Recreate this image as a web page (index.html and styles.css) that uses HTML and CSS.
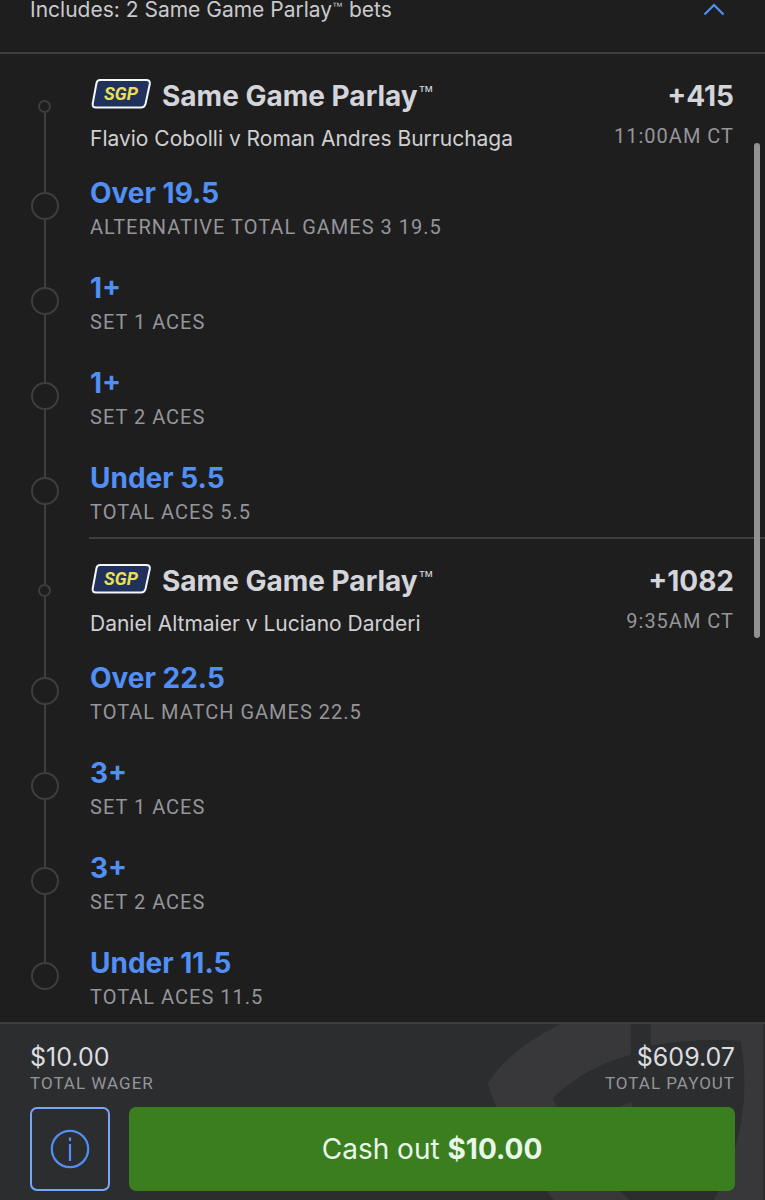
FILE: index.html
```html
<!DOCTYPE html>
<html lang="en">
<head>
<meta charset="utf-8">
<meta name="viewport" content="width=device-width, initial-scale=1">
<title>Same Game Parlay bets</title>
<link rel="stylesheet" href="styles.css">
</head>
<body>
<div class="app">
  <main class="slip">
    <button class="summary" type="button" aria-expanded="true">
      <span>Includes: 2 Same Game Parlay<sup class="tm">™</sup> bets</span>
      <svg class="chevron" viewBox="0 0 22 13" aria-hidden="true"><path d="M1.5 11.5 11 2l9.500 9.500"/></svg>
    </button>

    <section class="parlay">
      <header class="row parlay-head">
        <div class="rail"><i class="dot dot-small"></i></div>
        <div class="parlay-info">
          <div class="line">
            <h2 class="title">
              <svg class="sgp" viewBox="0 1 62 30" role="img" aria-label="SGP"><path d="M10 2H56Q60.500 2 59.800 6L55.500 26Q54.500 29.500 51 29.500H6Q2 29.500 2.700 25.500L6.500 5Q7.300 2 10 2Z"/><text x="31" y="22">SGP</text></svg>
              <span>Same Game Parlay<sup class="tm">™</sup></span>
            </h2>
            <span class="odds">+415</span>
          </div>
          <div class="line line-sub">
            <span class="match">Flavio Cobolli v Roman Andres Burruchaga</span>
            <time class="caption">11:00AM CT</time>
          </div>
        </div>
      </header>
      <div class="row leg"><div class="rail"><i class="dot"></i></div><div class="pick"><h3 class="name">Over 19.5</h3><p class="caption">ALTERNATIVE TOTAL GAMES 3 19.5</p></div></div>
      <div class="row leg"><div class="rail"><i class="dot"></i></div><div class="pick"><h3 class="name">1+</h3><p class="caption">SET 1 ACES</p></div></div>
      <div class="row leg"><div class="rail"><i class="dot"></i></div><div class="pick"><h3 class="name">1+</h3><p class="caption">SET 2 ACES</p></div></div>
      <div class="row leg"><div class="rail"><i class="dot"></i></div><div class="pick"><h3 class="name">Under 5.5</h3><p class="caption">TOTAL ACES 5.5</p></div></div>
    </section>

    <section class="parlay">
      <header class="row parlay-head">
        <div class="rail"><i class="dot dot-small"></i></div>
        <div class="parlay-info">
          <div class="line">
            <h2 class="title">
              <svg class="sgp" viewBox="0 1 62 30" role="img" aria-label="SGP"><path d="M10 2H56Q60.500 2 59.800 6L55.500 26Q54.500 29.500 51 29.500H6Q2 29.500 2.700 25.500L6.500 5Q7.300 2 10 2Z"/><text x="31" y="22">SGP</text></svg>
              <span>Same Game Parlay<sup class="tm">™</sup></span>
            </h2>
            <span class="odds">+1082</span>
          </div>
          <div class="line line-sub">
            <span class="match">Daniel Altmaier v Luciano Darderi</span>
            <time class="caption">9:35AM CT</time>
          </div>
        </div>
      </header>
      <div class="row leg"><div class="rail"><i class="dot"></i></div><div class="pick"><h3 class="name">Over 22.5</h3><p class="caption">TOTAL MATCH GAMES 22.5</p></div></div>
      <div class="row leg"><div class="rail"><i class="dot"></i></div><div class="pick"><h3 class="name">3+</h3><p class="caption">SET 1 ACES</p></div></div>
      <div class="row leg"><div class="rail"><i class="dot"></i></div><div class="pick"><h3 class="name">3+</h3><p class="caption">SET 2 ACES</p></div></div>
      <div class="row leg"><div class="rail"><i class="dot"></i></div><div class="pick"><h3 class="name">Under 11.5</h3><p class="caption">TOTAL ACES 11.5</p></div></div>
    </section>
    <div class="scroll-thumb"></div>
  </main>

  <footer class="footer">
    <svg class="shield" viewBox="0 0 290 178" aria-hidden="true">
      <path class="shield-body" d="M85 0H290V178H78Q30 118 11 60Q34 25 85 0Z"/>
      <path class="shield-cut" d="M156 0H176V22Q220 14 267 17Q282 98 240 178H155Q98 130 77 75Q110 43 156 31Z"/>
      <path class="shield-body" d="M140 86 156 79 162 92H130Z"/>
    </svg>
    <div class="totals">
      <div><div class="amount">$10.00</div><div class="label">TOTAL WAGER</div></div>
      <div class="payout"><div class="amount">$609.07</div><div class="label">TOTAL PAYOUT</div></div>
    </div>
    <div class="actions">
      <button class="info" type="button" aria-label="Bet information">
        <svg viewBox="0 0 40 40" aria-hidden="true"><circle cx="20" cy="20" r="18.200"/><path d="M20 8.500v3.500M20 15v17"/></svg>
      </button>
      <button class="cashout" type="button">Cash out <strong>$10.00</strong></button>
    </div>
  </footer>
</div>
</body>
</html>
```
FILE: styles.css
```css
* { box-sizing: border-box; }
body {
  margin: 0;
  background: #1e1e1e;
  color: #d4d5da;
  font-family: Inter, "Liberation Sans", sans-serif;
}
h2, h3, p { margin: 0; }
button { font: inherit; cursor: pointer; }

.app { display: flex; flex-direction: column; min-height: 100vh; }
.slip { position: relative; flex: 1; }

.summary {
  display: flex;
  justify-content: space-between;
  align-items: flex-start;
  width: 100%;
  height: 52px;
  padding: 0 40px 0 30px;
  border: 0;
  background: none;
  color: #c9cacd;
  font-size: 21px;
  line-height: 20px;
  text-align: left;
}
.chevron {
  width: 22px;
  height: 13px;
  margin-top: 3px;
  fill: none;
  stroke: #528ff5;
  stroke-width: 2.2;
}
.tm {
  font-family: "Liberation Sans", sans-serif;
  font-size: 16px;
  font-weight: 400;
  line-height: 0;
  vertical-align: 9px;
}
.summary .tm { font-size: 11px; vertical-align: 7px; }

.row { display: flex; }
.rail {
  display: flex;
  flex-direction: column;
  align-items: center;
  flex: none;
  width: 89px;
}
.rail::before, .rail::after { content: ""; width: 2px; background: #3e3e3f; }
.rail::before { height: 27px; }
.rail::after { flex: 1; }
.dot { flex: none; width: 28px; height: 28px; border: 2px solid #3e3e3f; border-radius: 50%; }
.dot-small { width: 13px; height: 13px; }
.parlay-head .rail::before { height: 47px; }
.parlay:first-of-type .parlay-head .rail::before,
.parlay:last-of-type .leg:last-child .rail::after { background: none; }

.parlay-info { flex: 1; height: 113px; padding: 25px 31px 0 1px; border-top: 2px solid #3e3e3f; }
.parlay:first-of-type .parlay-head { border-top: 2px solid #3e3e3f; }
.parlay:first-of-type .parlay-info { height: 111px; border-top: 0; }
.parlay:first-of-type .parlay-head .rail::before { height: 46px; }

.line { display: flex; justify-content: space-between; align-items: center; height: 34px; }
.line-sub { height: 26px; margin-top: 13px; }
.title { display: flex; align-items: flex-start; gap: 10px; font-size: 28px; line-height: 34px; }
.odds { font-size: 28px; font-weight: 700; line-height: 34px; }
.match { color: #d0d0d3; font-size: 21px; line-height: 26px; }
.line-sub .caption { align-self: flex-start; line-height: 20px; }
.sgp { width: 62px; height: 30px; }
.sgp path { fill: #20325c; stroke: #f2f6ff; stroke-width: 2; }
.sgp text {
  fill: #ecdf55;
  font: italic 700 18px Roboto, sans-serif;
  text-anchor: middle;
}

.pick { padding: 11px 0 18px 1px; }
.name { color: #528ff5; font-size: 28px; line-height: 34px; }
.caption {
  color: #95959a;
  font-family: Roboto, sans-serif;
  font-size: 20px;
  line-height: 30px;
  letter-spacing: 1px;
}
.pick .caption { margin-top: 2px; }
.leg:last-child .pick { padding-bottom: 10px; }

.scroll-thumb {
  position: absolute;
  top: 14%;
  right: 5px;
  width: 6px;
  height: 48.4%;
  border-radius: 3px;
  background: #929292;
}

.footer {
  position: relative;
  padding: 18px 30px 9px;
  border-top: 2px solid #3c3e40;
  background: #2c2d2f;
}
.shield { position: absolute; top: 0; right: 0; width: 290px; height: 100%; }
.shield-body { fill: #38383a; }
.shield-cut { fill: #2c2d2f; }
.totals, .actions { position: relative; display: flex; justify-content: space-between; }
.payout { text-align: right; }
.amount { font-size: 25px; line-height: 30px; color: #dcdde1; }
.label {
  color: #95959a;
  font-family: Roboto, sans-serif;
  font-size: 17px;
  line-height: 22px;
  letter-spacing: 1px;
}
.actions { gap: 19px; margin-top: 13px; }
.info {
  display: grid;
  place-items: center;
  flex: none;
  width: 80px;
  height: 84px;
  padding: 0;
  border: 2px solid #78a6f2;
  border-radius: 7px;
  background: #2c2d2f;
}
.info svg { width: 40px; height: 40px; fill: none; stroke: #528ff5; stroke-width: 2.2; }
.cashout {
  flex: 1;
  border: 0;
  border-radius: 7px;
  background: #3a7e20;
  color: #e9f7e8;
  font-size: 28px;
}
```
